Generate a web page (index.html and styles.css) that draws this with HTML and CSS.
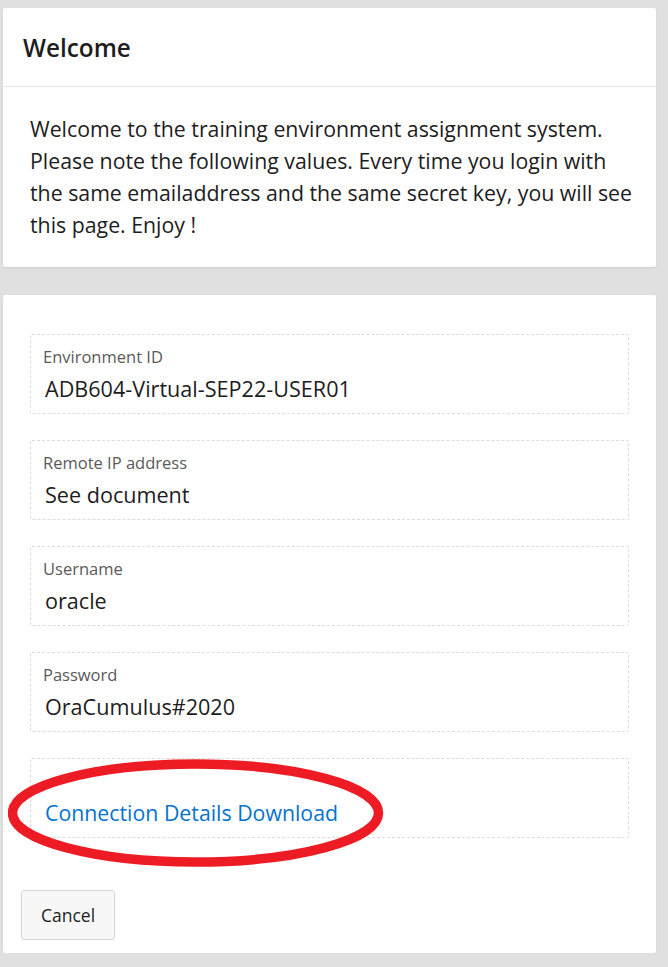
FILE: index.html
```html
<!DOCTYPE html>
<html>
<head>
<meta charset="utf-8">
<link rel="stylesheet" href="styles.css">
</head>
<body>
<div class="page">
  <section class="card">
    <header class="card-header"><h1>Welcome</h1></header>
    <p class="intro">Welcome to the training environment assignment system.<br>Please note the following values. Every time you login with<br>the same emailaddress and the same secret key, you will see<br>this page. Enjoy !</p>
  </section>
  <section class="card form-card">
    <div class="fields">
      <div class="field">
        <div class="label">Environment ID</div>
        <div class="value">ADB604-Virtual-SEP22-USER01</div>
      </div>
      <div class="field">
        <div class="label">Remote IP address</div>
        <div class="value">See document</div>
      </div>
      <div class="field">
        <div class="label">Username</div>
        <div class="value">oracle</div>
      </div>
      <div class="field">
        <div class="label">Password</div>
        <div class="value">OraCumulus#2020</div>
      </div>
      <div class="field link-field">
        <div class="label">&nbsp;</div>
        <div class="value"><a href="#" class="link">Connection Details Download</a></div>
        <svg class="circle" width="380" height="115" viewBox="0 0 380 115">
          <ellipse cx="187.5" cy="57" rx="183" ry="49" fill="none" stroke="#ed1c24" stroke-width="9.5"/>
        </svg>
      </div>
    </div>
    <div class="actions">
      <button class="btn">Cancel</button>
    </div>
  </section>
</div>
</body>
</html>
```
FILE: styles.css
```css
* { box-sizing: border-box; }
html, body { margin: 0; padding: 0; }
body {
  background: #e0e0e0;
  font-family: "Open Sans", "Noto Sans", sans-serif;
  color: #1d1d1d;
}
.page {
  width: 653px;
  margin-left: 3px;
  padding-top: 8px;
  display: flex;
  flex-direction: column;
  gap: 28px;
}
.card {
  background: #fff;
  border-radius: 2px;
  box-shadow: 0 1px 2px rgba(0,0,0,0.08);
}
.card-header {
  height: 79px;
  border-bottom: 1px solid #e5e5e5;
  display: flex;
  align-items: center;
  padding-left: 20px;
}
.card-header h1 {
  margin: 0;
  font-size: 24.3px;
  font-weight: 600;
  color: #1d1d1d;
}
.intro {
  margin: 0;
  padding: 26px 0 26px 27px;
  font-size: 21.3px;
  line-height: 32px;
  white-space: nowrap;
  color: #1d1d1d;
}
.form-card {
  padding: 39px 0 14px 0;
  height: 658px;
}
.fields {
  display: flex;
  flex-direction: column;
  gap: 26px;
  padding: 0 27px;
}
.field {
  height: 80px;
  border: 1px dashed #dcdcdc;
  border-radius: 2px;
  padding: 11px 0 0 12px;
  position: relative;
}
.label {
  font-size: 16.5px;
  line-height: 22px;
  color: #5a5a5a;
}
.value {
  font-size: 21.6px;
  line-height: 42px;
  padding-left: 2px;
  color: #1d1d1d;
}
.link {
  color: #0572ce;
  text-decoration: none;
  font-size: 21.3px;
}
.circle {
  position: absolute;
  left: -23px;
  top: -3px;
  pointer-events: none;
}
.actions {
  padding: 52px 0 0 18px;
}
.btn {
  width: 94px;
  height: 50px;
  background: #f7f7f7;
  border: 1px solid #d6d6d6;
  border-radius: 3px;
  font-family: inherit;
  font-size: 17.5px;
  color: #1d1d1d;
}
```
